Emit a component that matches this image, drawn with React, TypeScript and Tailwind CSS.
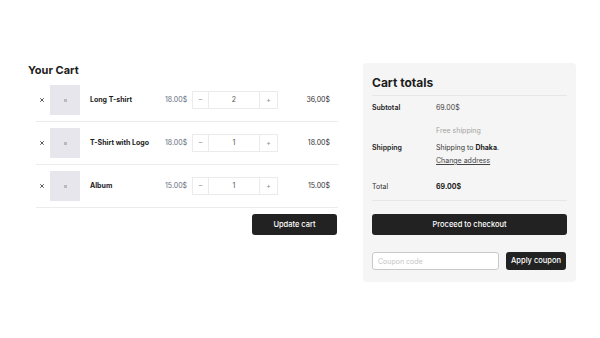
import { X } from 'lucide-react';

const items = [
  { name: 'Long T-shirt', price: '18.00$', qty: 2, total: '36,00$' },
  { name: 'T-Shirt with Logo', price: '18.00$', qty: 1, total: '18.00$' },
  { name: 'Album', price: '15.00$', qty: 1, total: '15.00$' },
];

export default function App() {
  return (
    <div className="w-[600px] h-[338px] bg-white font-['Inter',sans-serif] text-[#1c1c1c]">
      <div className="flex pt-[63px] pl-[28px]">
        {/* Cart list */}
        <div className="w-[310px]">
          <h1 className="text-[11px] leading-[14px] font-bold">Your Cart</h1>
          <div className="ml-[8px] mt-[2px]">
            {items.map(item => (
              <div key={item.name} className="flex items-center h-[43px] border-b border-[#ececec]">
                <div className="w-[12px] flex justify-center">
                  <X size={6} strokeWidth={3} className="text-[#222]" />
                </div>
                <div className="ml-[2px] w-[30px] h-[30px] bg-[#e6e6ec] flex items-center justify-center">
                  <div className="w-[3px] h-[3px] bg-[#b9b9c4]" />
                </div>
                <div className="ml-[10px] w-[75px] text-[7px] font-bold">{item.name}</div>
                <div className="w-[27px] text-[7px] text-[#646c82]">{item.price}</div>
                <div className="w-[86px] h-[18px] flex border border-[#ebebeb] text-[7px] text-[#8a8a8a]">
                  <div className="w-[16px] flex items-center justify-center border-r border-[#ebebeb]">–</div>
                  <div className="flex-1 flex items-center justify-center text-[#555]">{item.qty}</div>
                  <div className="w-[18px] flex items-center justify-center border-l border-[#ebebeb]">+</div>
                </div>
                <div className="flex-1 text-right pr-[8px] text-[7px] text-[#333]">{item.total}</div>
              </div>
            ))}
          </div>
          <div className="flex justify-end mt-[6px] pr-[1px]">
            <button className="w-[85px] h-[21px] rounded-[3px] bg-[#222] text-white text-[7.5px] font-medium">
              Update cart
            </button>
          </div>
        </div>

        {/* Totals panel */}
        <div className="ml-[25px] w-[213px] h-[219px] bg-[#f5f5f5] rounded-[4px] px-[9px]">
          <h2 className="pt-[12px] pb-[4px] text-[12px] leading-[16px] font-bold border-b border-[#e6e6e6]">
            Cart totals
          </h2>
          <div className="border-b border-[#e6e6e6] pb-[7px] text-[7px] leading-[12px]">
            <div className="flex pt-[6px]">
              <div className="w-[64px] font-semibold">Subtotal</div>
              <div className="text-[#444]">69.00$</div>
            </div>
            <div className="flex mt-[11px]">
              <div className="w-[64px] font-semibold pt-[17px]">Shipping</div>
              <div>
                <div className="text-[#a3a3a3]">Free shipping</div>
                <div className="mt-[5px] text-[#333]">
                  Shipping to <span className="font-bold text-[#1c1c1c]">Dhaka</span>.
                </div>
                <div className="mt-[1px] underline text-[#444]">Change address</div>
              </div>
            </div>
            <div className="flex mt-[14px]">
              <div className="w-[64px] text-[#333]">Total</div>
              <div className="font-bold">69.00$</div>
            </div>
          </div>
          <button className="mt-[13px] w-full h-[21px] rounded-[3px] bg-[#222] text-white text-[7.5px] font-medium">
            Proceed to checkout
          </button>
          <div className="flex items-center mt-[17px] gap-[7px]">
            <input
              placeholder="Coupon code"
              className="w-[127px] h-[18px] bg-white border border-[#c9c9c9] rounded-[3px] px-[5px] text-[7px] placeholder:text-[#c4c4c4] outline-none"
            />
            <button className="w-[60px] h-[18px] rounded-[3px] bg-[#222] text-white text-[7.5px] font-medium">
              Apply coupon
            </button>
          </div>
        </div>
      </div>
    </div>
  );
}
